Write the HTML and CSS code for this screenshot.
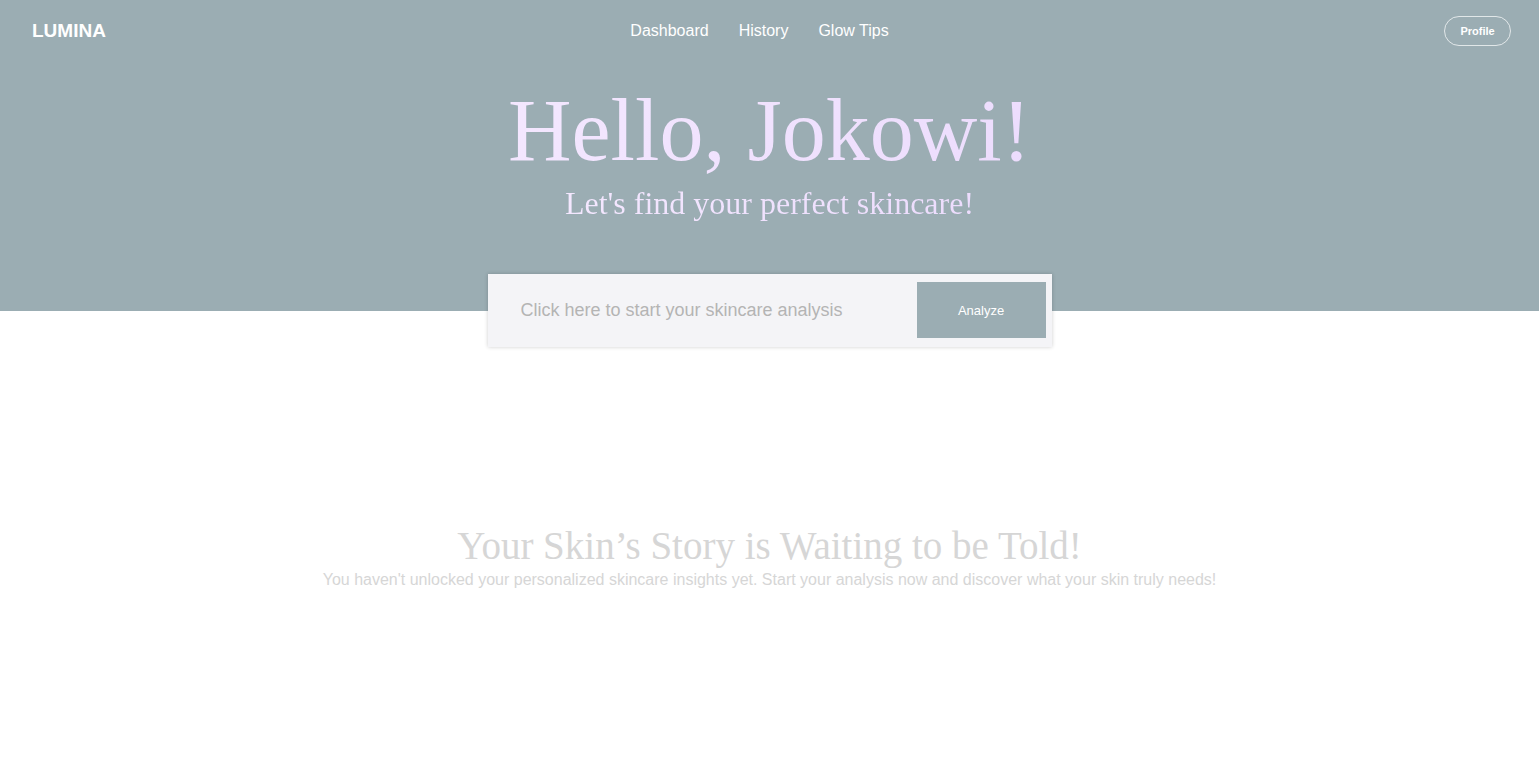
FILE: index.html
```html
<!DOCTYPE html>
<html lang="en">
<head>
<meta charset="utf-8">
<meta name="viewport" content="width=device-width, initial-scale=1">
<title>Lumina</title>
<link rel="stylesheet" href="styles.css">
</head>
<body>
<header class="hero">
  <nav class="navbar">
    <a class="brand" href="#">LUMINA</a>
    <div class="nav-links">
      <a href="#">Dashboard</a>
      <a href="#">History</a>
      <a href="#">Glow Tips</a>
    </div>
    <button class="profile" type="button">Profile</button>
  </nav>
  <h1 class="greeting">Hello, Jokowi!</h1>
  <p class="tagline">Let's find your perfect skincare!</p>
</header>
<main>
  <form class="analysis">
    <input class="analysis-input" type="text" aria-label="Skincare analysis" placeholder="Click here to start your skincare analysis">
    <button class="analyze" type="button">Analyze</button>
  </form>
  <section class="empty">
    <h2 class="empty-title">Your Skin’s Story is Waiting to be Told!</h2>
    <p class="empty-text">You haven't unlocked your personalized skincare insights yet. Start your analysis now and discover what your skin truly needs!</p>
  </section>
</main>
</body>
</html>
```
FILE: styles.css
```css
* { box-sizing: border-box; }
body {
  margin: 0;
  background: #fff;
  font-family: "Liberation Sans", Arial, sans-serif;
}
.hero {
  padding-bottom: 87px;
  background: #9badb3;
  text-align: center;
}
.navbar {
  display: grid;
  grid-template-columns: 1fr auto 1fr;
  align-items: center;
  height: 61px;
  padding: 0 28px 0 32px;
}
.navbar a { color: #fff; text-decoration: none; }
.brand { justify-self: start; font-size: 19px; font-weight: 700; }
.nav-links { display: flex; gap: 30px; margin-right: 24px; font-size: 16px; }
.profile {
  justify-self: end;
  width: 67px;
  height: 30px;
  border: 1px solid rgba(255, 255, 255, 0.7);
  border-radius: 15px;
  background: transparent;
  color: #fff;
  font: 700 11px "Liberation Sans", Arial, sans-serif;
}
.greeting, .tagline {
  width: fit-content;
  margin: 0 auto;
  background: linear-gradient(120deg, #f4e8ff, #ecdcfd);
  background-clip: text;
  color: transparent;
  font-family: "Liberation Serif", "Times New Roman", serif;
  font-weight: 400;
}
.greeting { padding-top: 19px; font-size: 88px; line-height: 102px; }
.tagline { font-size: 32px; line-height: 42px; }
.analysis {
  display: flex;
  width: min(564px, 100%);
  height: 73px;
  margin: -37px auto 0;
  padding: 8px 6px 9px 33px;
  background: #f4f4f7;
  box-shadow: 0 0 4px rgba(0, 0, 0, 0.2);
}
.analysis-input {
  flex: 1;
  min-width: 0;
  padding: 0;
  border: 0;
  outline: 0;
  background: transparent;
  font: 18px "Liberation Sans", Arial, sans-serif;
}
.analysis-input::placeholder { color: #b4b4b4; opacity: 1; }
.analyze {
  width: 129px;
  border: 0;
  background: #9badb3;
  color: #fff;
  font: 13px "Liberation Sans", Arial, sans-serif;
}
.empty { padding: 176px 16px 160px; color: #d6d6d6; text-align: center; }
.empty-title {
  margin: 0;
  font: 400 39px/46px "Liberation Serif", "Times New Roman", serif;
}
.empty-text { margin: 0; font-size: 16px; line-height: 22px; }
```
